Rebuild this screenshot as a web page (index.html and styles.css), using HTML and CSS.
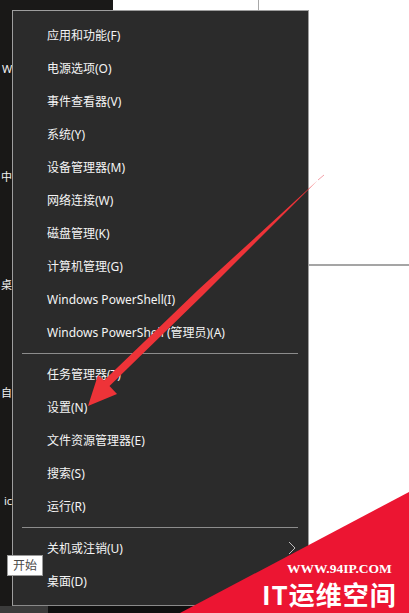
FILE: index.html
```html
<!DOCTYPE HTML>
<html>
<head>
<meta http-equiv="Content-Type" content="text/html; charset=utf-8">
<title>Win+X 菜单</title>
<link rel="stylesheet" href="styles.css">
</head>
<body>
<div id="screen">
    <!-- 顶部：桌面和后面的窗口 -->
    <div class="topBar">
        <div class="topDark"></div>
        <div class="topWhite"><span class="winEdge"></span></div>
    </div>

    <div class="middle">
        <!-- 左边露出来的桌面图标文字 -->
        <div class="desk">
            <span class="label l1">W</span>
            <span class="label l2">中</span>
            <span class="label l3">桌</span>
            <span class="label l4">自</span>
            <span class="label l5">ic</span>
        </div>

        <!-- 菜单 -->
        <ul class="menu">
            <li>应用和功能(F)</li>
            <li>电源选项(O)</li>
            <li>事件查看器(V)</li>
            <li>系统(Y)</li>
            <li>设备管理器(M)</li>
            <li>网络连接(W)</li>
            <li>磁盘管理(K)</li>
            <li>计算机管理(G)</li>
            <li>Windows PowerShell(I)</li>
            <li>Windows PowerShell (管理员)(A)</li>
            <li class="sep"><i></i></li>
            <li>任务管理器(T)</li>
            <li>设置(N)</li>
            <li>文件资源管理器(E)</li>
            <li>搜索(S)</li>
            <li>运行(R)</li>
            <li class="sep"><i></i></li>
            <li class="sub">关机或注销(U)
                <svg class="chev" width="8" height="14" viewBox="0 0 8 14"><polyline points="1,1 7,7 1,13" fill="none" stroke="#bdbdbd" stroke-width="1"/></svg>
            </li>
            <li>桌面(D)</li>
        </ul>

        <div class="side"><span class="sideLine"></span></div>
    </div>

    <div class="taskbar"><span class="tbStart"></span><span class="tbRest"></span></div>

    <!-- 开始按钮的提示 -->
    <div class="tip">开始</div>

    <!-- 红色箭头 -->
    <svg class="arrow" width="409" height="613" viewBox="0 0 409 613">
        <line x1="318" y1="180" x2="324" y2="175" stroke="#f3a0a8" stroke-width="1"/>
        <polygon points="318.5,179.5 202.5,295.5 109.5,386 117,394 88,406 98,375 104,380.5 197.5,290.5 317.5,180.5" fill="#ee3338"/>
    </svg>

    <!-- 水印 -->
    <div class="mark">
        <svg class="markBg" width="409" height="613" viewBox="0 0 409 613"><polygon points="409,492 409,613 180,613" fill="#ec1532"/></svg>
        <p class="site">WWW.94IP.COM</p>
        <p class="brand">IT运维空间</p>
    </div>
</div>
</body>
</html>
```

FILE: styles.css
```css
html,body,ul,li,p{
   margin: 0px;
   padding: 0px;
}
li{
   list-style: none;
}
body{
   background: #fff;
   font-family: "Noto Sans", "Noto Sans CJK SC", sans-serif;
}
#screen{
   width: 409px;
   height: 613px;
   position: relative;
   overflow: hidden;
   background: #fff;
}
/*顶部*/
.topBar{
   height: 10px;
   display: flex;
}
.topDark{
   width: 113px;
   background: #1a1918;
}
.topWhite{
   flex: 1;
   background: #fff;
}
.winEdge{
   display: block;
   width: 1px;
   height: 10px;
   margin-left: 145px;
   background: #a8a8a8;
}
.middle{
   height: 596px;
   display: flex;
}
/*左边桌面*/
.desk{
   width: 12px;
   background: #191817;
   overflow: hidden;
   display: flex;
   flex-direction: column;
   padding-top: 51px;
   gap: 92px;
   box-sizing: border-box;
}
.label{
   display: block;
   height: 16px;
   line-height: 16px;
   color: #f2f2f2;
   font-size: 11px;
   white-space: nowrap;
}
.l1{ margin-left: 2px; }
.l2{ margin-left: 1px; }
.l3{ margin-left: 1px; }
.l4{ margin-left: 1px; }
.l5{ margin-left: 4px; }
/*菜单*/
.menu{
   width: 297px;
   box-sizing: border-box;
   background: #2b2b2b;
   border: 1px solid #9e9e9e;
   border-bottom: 1px solid #8a8a8a;
   padding: 8px 0 7px 0;
}
.menu li{
   height: 33px;
   line-height: 33px;
   padding-left: 34px;
   color: #f4f4f4;
   font-size: 12px;
   white-space: nowrap;
   position: relative;
}
.menu li.sep{
   height: 9px;
   padding: 4px 10px 4px 9px;
   box-sizing: border-box;
}
.menu li.sep i{
   display: block;
   height: 1px;
   background: #8c8c8c;
}
.chev{
   position: absolute;
   right: 12px;
   top: 9px;
}
/*右边窗口*/
.side{
   flex: 1;
   background: #fff;
}
.sideLine{
   display: block;
   height: 2px;
   margin-top: 254px;
   background: #a5a5a5;
}
.taskbar{
   height: 7px;
   display: flex;
}
.tbStart{
   width: 48px;
   background: #3b3b3b;
}
.tbRest{
   width: 262px;
   background: #101010;
}
/*提示*/
.tip{
   position: absolute;
   left: 7px;
   top: 555px;
   width: 36px;
   height: 21px;
   box-sizing: border-box;
   border: 1px solid #9a9a9a;
   background: #fff;
   color: #4a4a4a;
   font-size: 12px;
   line-height: 19px;
   text-align: center;
}
.arrow{
   position: absolute;
   left: 0px;
   top: 0px;
}
/*水印*/
.mark{
   position: absolute;
   left: 0px;
   top: 0px;
   width: 409px;
   height: 613px;
}
.markBg{
   position: absolute;
   left: 0px;
   top: 0px;
}
.site{
   position: absolute;
   left: 287px;
   top: 561px;
   color: #fff;
   font-family: "Liberation Serif", serif;
   font-weight: bold;
   font-size: 13.5px;
   line-height: 16px;
}
.brand{
   position: absolute;
   left: 262px;
   top: 578px;
   color: #fff;
   font-family: "Noto Sans CJK SC", sans-serif;
   font-weight: bold;
   font-size: 26px;
   line-height: 32px;
   letter-spacing: 1px;
}
```
